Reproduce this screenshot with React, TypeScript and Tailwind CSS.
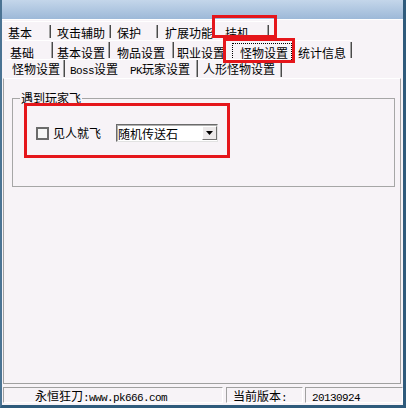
import React from "react";

// Old-style Win32 settings dialog: three nested tab strips, one group box,
// and a sunken status bar. The red rectangles are annotation overlays.

const CJK = "font-['Noto_Sans_CJK_SC','Noto_Sans_CJK_JP',sans-serif]";
const MONO = "font-['Liberation_Mono',monospace] text-[11px] tracking-[-0.6px]";

interface TabDef {
  label: React.ReactNode;
  w: number;
  pl: number;
  selected?: boolean;
  sep?: boolean;
}

const row1: TabDef[] = [
  { label: "基本", w: 48, pl: 5 },
  { label: "攻击辅助", w: 60, pl: 6 },
  { label: "保护", w: 47, pl: 6 },
  { label: "扩展功能", w: 62, pl: 7, sep: false },
  { label: "挂机", w: 49, pl: 5, selected: true },
];

const row2: TabDef[] = [
  { label: "基础", w: 48, pl: 5 },
  { label: "基本设置", w: 57, pl: 4 },
  { label: "物品设置", w: 64, pl: 7 },
  { label: "职业设置", w: 52, pl: 3, sep: false },
  { label: "怪物设置", w: 69, pl: 14, selected: true },
  { label: "统计信息", w: 57, pl: 3 },
];

const row3: TabDef[] = [
  { label: "怪物设置", w: 58, pl: 5 },
  {
    label: (
      <>
        <span className={MONO}>Boss</span>设置
      </>
    ),
    w: 61,
    pl: 5,
    sep: false,
  },
  {
    label: (
      <>
        <span className={MONO}>PK</span>玩家设置
      </>
    ),
    w: 72,
    pl: 4,
    selected: true,
  },
  { label: "人形怪物设置", w: 84, pl: 5 },
];

export default function App() {
  return (
    <div className={`relative h-[408px] w-[406px] ${CJK} text-[12px] leading-[12px] text-black`}>
      <div className="flex h-full flex-col border-b-[3px] border-l-2 border-r-[3px] border-b-[#2f5b7c] border-l-[#4a7393] border-r-[#2f5b7c] bg-[#f7f3f7]">
        {/* title bar remnant */}
        <div className="h-[20px] shrink-0 border-b border-white bg-gradient-to-b from-[#c4d6ea] to-[#9db9d8]" />

        <div className="mt-[1px] flex flex-col">
          <TabRow tabs={row1} offset={1} pt={6} sepTop={4} sepH={13} />
          <TabRow tabs={row2} offset={3} pt={7} sepTop={2} sepH={16} focus />
          <TabRow tabs={row3} offset={5} pt={4} sepTop={1} sepH={17} />
        </div>

        {/* page body */}
        <div className="ml-[1px] mr-[2px] h-[306px] shrink-0 border-b border-l border-r border-t border-b-[#a0a0a0] border-l-[#a0a0a0] border-r-[#a0a0a0] border-t-white">
          <fieldset className="ml-[8px] mt-[13px] h-[95px] w-[383px] border border-[#a6a6a6]">
            <legend className="ml-[7px] px-[1px] leading-[12px]">遇到玩家飞</legend>
            <div className="ml-[23px] mt-[20px] flex h-[18px] items-center">
              <span className="h-[13px] w-[13px] border-2 border-[#6b6b6b] bg-[#f6f6f6]" />
              <span className="ml-[4px]">见人就飞</span>
              <div className="ml-[15px] flex h-[18px] w-[102px] items-center border border-b-[#e2e2e2] border-l-[#6a6a6a] border-r-[#e2e2e2] border-t-[#6a6a6a] bg-white shadow-[inset_1px_1px_0_#b0b0b0]">
                <span className="flex-1 pl-[1px] pt-[1px]">随机传送石</span>
                <span className="flex h-[14px] w-[15px] items-center justify-center border border-b-[#6f6f6f] border-l-white border-r-[#6f6f6f] border-t-white bg-[#ece9ea]">
                  <svg width="7" height="4" viewBox="0 0 7 4">
                    <polygon points="0,0 7,0 3.5,4" fill="#000" />
                  </svg>
                </span>
              </div>
            </div>
          </fieldset>
        </div>

        {/* status bar */}
        <div className="mt-[3px] flex h-[16px] shrink-0">
          <StatusCell className="ml-[1px] w-[220px] pl-[31px]">
            永恒狂刀<span className={MONO}>:www.pk666.com</span>
          </StatusCell>
          <StatusCell className="ml-[3px] w-[77px] pl-[6px]">
            当前版本<span className={MONO}>:</span>
          </StatusCell>
          <StatusCell className="ml-[2px] w-[98px] pl-[6px]">
            <span className={MONO}>20130924</span>
          </StatusCell>
        </div>
      </div>

      {/* annotation overlays */}
      <div className="absolute left-[212px] top-[15px] h-[23px] w-[65px] border-[3px] border-[#e5161b]" />
      <div className="absolute left-[223px] top-[38px] h-[25px] w-[72px] border-[3px] border-[#e5161b]" />
      <div className="absolute left-[24px] top-[103px] h-[55px] w-[206px] border-[3px] border-[#e5161b]" />
    </div>
  );
}

// ── Components ────────────────────────────────────────────────────────────────

function TabRow({
  tabs,
  offset,
  pt,
  sepTop,
  sepH,
  focus,
}: {
  tabs: TabDef[];
  offset: number;
  pt: number;
  sepTop: number;
  sepH: number;
  focus?: boolean;
}) {
  return (
    <div className="flex h-[19px]" style={{ marginLeft: offset }}>
      {tabs.map((t, i) => (
        <div
          key={i}
          className="relative flex h-full shrink-0 border-t border-white"
          style={{ width: t.w }}
        >
          <span className="flex-1 whitespace-nowrap" style={{ paddingLeft: t.pl, paddingTop: pt - 1 }}>
            {t.label}
          </span>
          {t.sep !== false && (
            <span
              className="w-[2px] border-l border-r border-l-[#a3a3a3] border-r-[#4a4a4a]"
              style={{ marginTop: sepTop - 1, height: sepH }}
            />
          )}
          {focus && t.selected && (
            <span className="absolute left-[6px] top-[2px] h-[19px] w-[60px] border border-dotted border-black" />
          )}
        </div>
      ))}
    </div>
  );
}

function StatusCell({ className, children }: { className: string; children: React.ReactNode }) {
  return (
    <div
      className={`h-full shrink-0 whitespace-nowrap border border-b-white border-l-[#a0a0a0] border-r-white border-t-[#a0a0a0] pt-[2px] ${className}`}
    >
      {children}
    </div>
  );
}
